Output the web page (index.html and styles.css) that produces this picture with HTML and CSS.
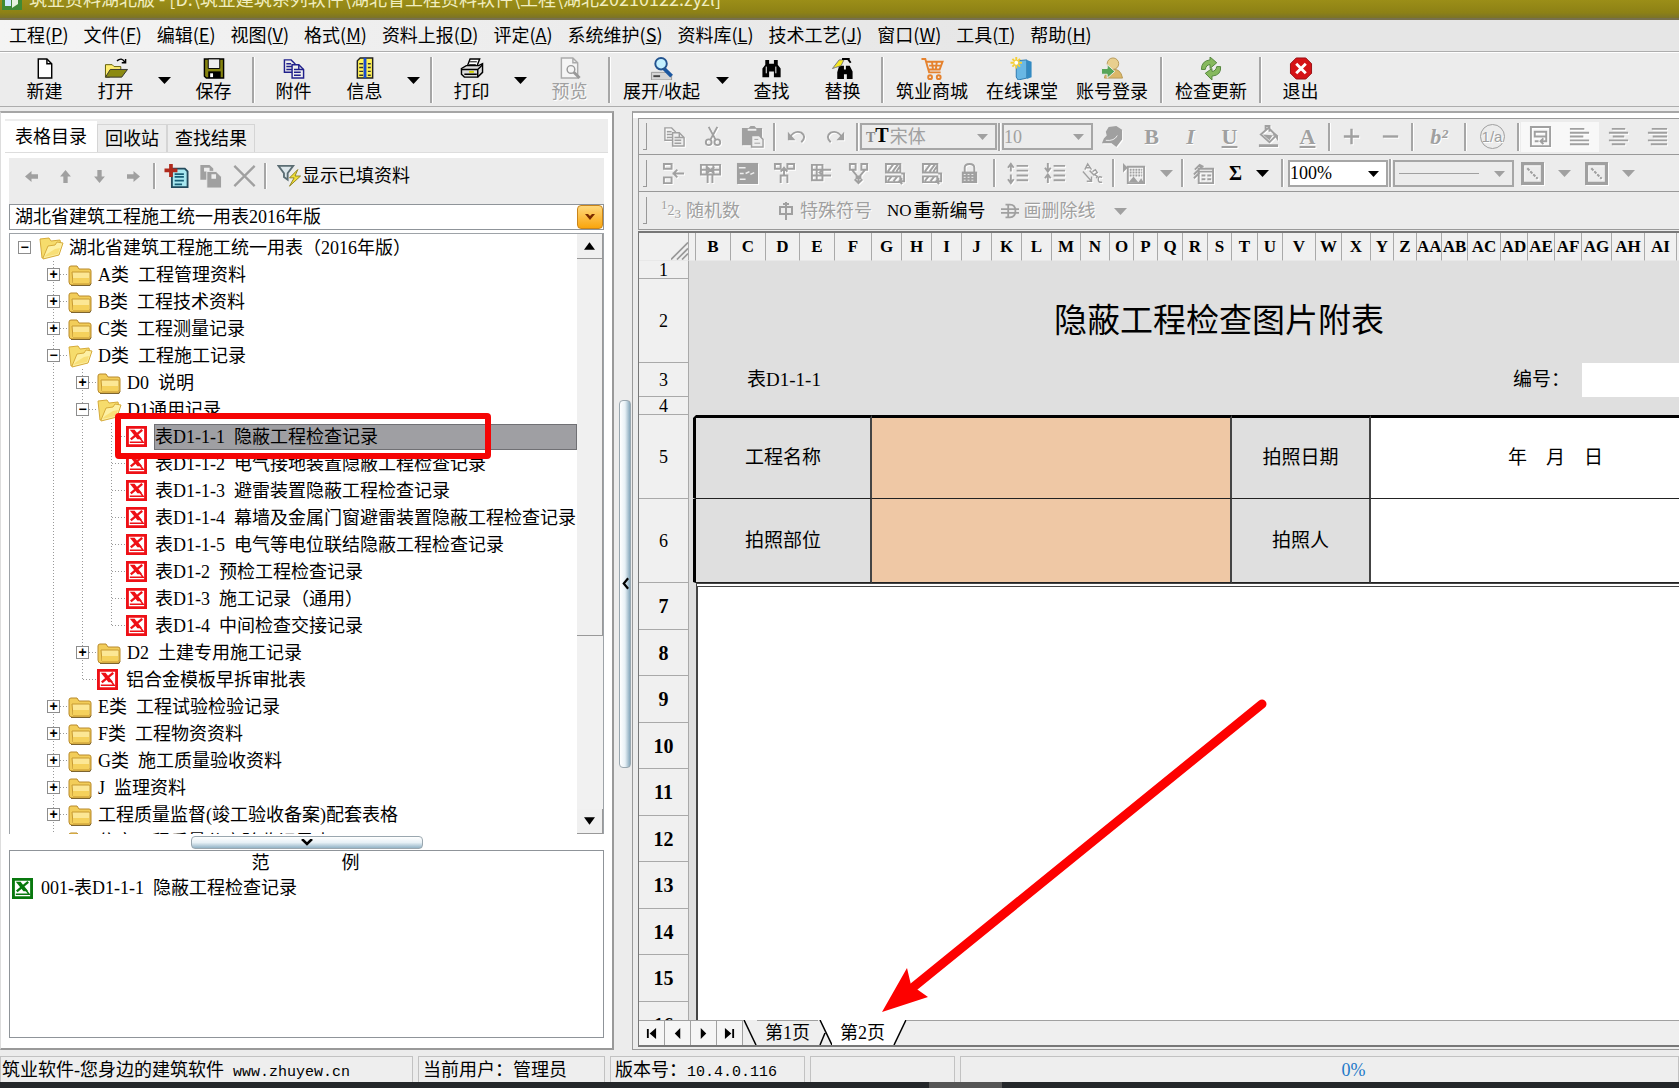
FILE: index.html
```html
<!DOCTYPE html>
<html lang="zh-CN">
<head>
<meta charset="utf-8">
<title>筑业资料湖北版</title>
<link rel="stylesheet" href="styles.css">
</head>
<body>
<svg class="defs" aria-hidden="true">
  <symbol id="closed" viewBox="0 0 25 24"><path d="M1 5q0-2 2-2h6l2 3h10q2 0 2 2v12q0 2-2 2H4q-3 0-3-3z" fill="#f2cd5a" stroke="#b98a2a"/><path d="M4 9h17q1 0 1 1v10H5z" fill="#fce795" stroke="#c79a33"/><path d="M5 15h16v5H5z" fill="#f5d15c"/><path d="M3 22.500h19l1-2" stroke="#7d6430" fill="none"/></symbol>
  <symbol id="opened" viewBox="0 0 25 24"><path d="M1 3l9-1 2 3 9-1 1 5-15 12-4 1z" fill="#f6dc6c" stroke="#d6ab3a"/><path d="M4 22l5-12 7-1 2-3 6 1-4 12-16 4z" fill="#fdf0a4" stroke="#d6ab3a"/><path d="M8 18l8-5 5-1-2 6-14 3z" fill="#f8df77"/></symbol>
  <symbol id="xls" viewBox="0 0 22 22"><path d="M1.500 1.500h19v19h-19z" fill="#fff" stroke="currentColor" stroke-width="3"/><path d="M4 4h5l8 10h-5z" fill="currentColor"/><path d="M17 4L5 14" stroke="currentColor" stroke-width="2.500"/><path d="M4 17h10M14 12l4 5h-5" stroke="currentColor" stroke-width="1.500" fill="none"/></symbol>
  <symbol id="down" viewBox="0 0 13 8"><path d="M0 1h13L6.500 8z" fill="currentColor"/></symbol>
  <symbol id="copy" viewBox="0 0 24 24"><path d="M2 3h7l4 4v9H2zM4 7h5M4 10h6M4 13h6" fill="none" stroke="currentColor" stroke-width="1.500"/><path d="M10 8h7l5 5v9H10z" fill="#eee" stroke="currentColor" stroke-width="1.500"/><path d="M12 13h5M12 16h7M12 19h7M17 8v5h5" fill="none" stroke="currentColor" stroke-width="1.500"/></symbol>
  <symbol id="bino" viewBox="0 0 24 24"><path d="M5 3h4v4h5V3h4v5l3 4v9h-7v-6h-5v6H2v-9l3-4z" fill="#000"/><path d="M6 10v7M16 10v7" stroke="#fff"/></symbol>
  <symbol id="cells" viewBox="0 0 24 24"><path d="M2 2h8v5H2zM2 16h8v6H2zM11 12h12M16 8l-4 4 4 4" fill="none" stroke="currentColor" stroke-width="2"/></symbol>
  <symbol id="gridtop" viewBox="0 0 24 24"><path d="M2 3h20v10H2zM2 8h20M8 3v10M15 3v10M9 22v-9M14 22v-9M8 5l8 7M16 5l-8 7" fill="none" stroke="currentColor" stroke-width="2"/></symbol>
  <symbol id="split" viewBox="0 0 24 24"><path d="M2 2h6v5H2zM15 2h7v5h-7zM8 22v-8h7v8M11.500 14V7M8 10l3.500-4 3.500 4" fill="none" stroke="currentColor" stroke-width="2"/></symbol>
  <symbol id="rowsplit" viewBox="0 0 24 24"><path d="M2 3h11v16H2zM2 8h11M2 14h11M7 3v16M22 8h-8l-4 3 4 3h8" fill="none" stroke="currentColor" stroke-width="2"/></symbol>
  <symbol id="merge" viewBox="0 0 24 24"><path d="M3 2h6v6H3zM15 2h6v6h-6zM5 8l5 6v4M19 8l-5 6v4M12 14v8M8 18l4 4 4-4" fill="none" stroke="currentColor" stroke-width="2"/></symbol>
  <symbol id="hatch" viewBox="0 0 24 24"><path d="M2 2h15v9H2zM2 15h15v6H2zM4 10l6-8M9 10l6-8M4 20l4-5M10 20l4-5M13 10l4-6M18 12h3v8h-4M19 17l-3 3 3 3" fill="none" stroke="currentColor" stroke-width="2"/></symbol>
  <symbol id="lock" viewBox="0 0 24 24"><path d="M7 11V6q0-4 5-4t5 4v5" fill="none" stroke="currentColor" stroke-width="2"/><path d="M4 10h16v12H4z" fill="currentColor"/><path d="M6 13h12M6 16h12M6 19h12" stroke="#eee" stroke-dasharray="2 2"/></symbol>
  <symbol id="spacing" viewBox="0 0 24 24"><path d="M10 4h12M10 9h12M10 14h12M10 19h12M4 3v7M1 6l3-4 3 4M4 13v8M1 18l3 4 3-4" fill="none" stroke="currentColor" stroke-width="2"/></symbol>
  <symbol id="tight" viewBox="0 0 24 24"><path d="M10 4h12M10 9h12M10 14h12M10 19h12M4 1v8M1 6l3 4 3-4M4 14v8M1 17l3-4 3 4" fill="none" stroke="currentColor" stroke-width="2"/></symbol>
  <symbol id="box" viewBox="0 0 22 22"><path d="M1.500 1.500h19v19h-19z" fill="none" stroke="currentColor" stroke-width="3"/><path d="M6 6l10 10" stroke="currentColor" stroke-width="2" stroke-dasharray="3 1"/></symbol>
</svg>

<header class="titlebar"><div class="title-inner">
  <svg class="app-icon" viewBox="0 0 22 26"><path d="M1 10L11 1l10 9v14H1z" fill="#3f8a35"/><path d="M4 11h6v9H4z" fill="#cfe8ff"/><path d="M11 13l6-3v8l-6 4z" fill="#e7f3df"/></svg>
  <span>筑业资料湖北版 - [D:\筑业建筑系列软件\湖北省工程资料软件\工程\湖北20210122.zyzl]</span>
</div></header>

<nav class="menubar">
  <button>工程(<u>P</u>)</button><button>文件(<u>F</u>)</button><button>编辑(<u>E</u>)</button><button>视图(<u>V</u>)</button><button>格式(<u>M</u>)</button><button>资料上报(<u>D</u>)</button><button>评定(<u>A</u>)</button><button>系统维护(<u>S</u>)</button><button>资料库(<u>L</u>)</button><button>技术工艺(<u>J</u>)</button><button>窗口(<u>W</u>)</button><button>工具(<u>T</u>)</button><button>帮助(<u>H</u>)</button>
</nav>

<div class="toolbar">
  <button class="tool"><svg viewBox="0 0 24 24"><path d="M5 2h9l5 5v15H5z" fill="#fff" stroke="#000" stroke-width="1.500"/><path d="M14 2v5h5" fill="none" stroke="#000" stroke-width="1.500"/></svg>新建</button>
  <button class="tool"><svg viewBox="0 0 24 24"><path d="M1 8h7l2 2h7v3l-12 8H1z" fill="#ffee70" stroke="#5d5a00"/><path d="M1 21l5-8h18l-6 8z" fill="#8b8a12" stroke="#333"/><path d="M13 4q5-4 8 1M22 2v4h-4" fill="none" stroke="#000" stroke-width="1.500"/></svg>打开</button>
  <button class="drop" aria-label="打开选项"><svg><use href="#down"/></svg></button>
  <button class="tool"><svg viewBox="0 0 24 24"><path d="M2 2h20v20H4l-2-2z" fill="#85830f" stroke="#000" stroke-width="1.500"/><path d="M6 2h12v10H6z" fill="#eee" stroke="#000"/><path d="M6 15h13v7H6z" fill="#000"/><path d="M8 17h3v4H8z" fill="#fff"/></svg>保存</button>
  <i class="sep"></i>
  <button class="tool"><svg class="navy"><use href="#copy"/></svg>附件</button>
  <button class="tool"><svg viewBox="0 0 24 24"><path d="M7 1h13v21H4V4z" fill="#fff257" stroke="#222" stroke-width="1.500"/><path d="M12 1v21" stroke="#174bd2" stroke-width="3"/><path d="M6 7h4M6 11h4M6 15h4M6 19h4M15 7h3M15 11h3M15 15h3M15 19h3" stroke="#333" stroke-width="1.500"/></svg>信息</button>
  <button class="drop" aria-label="信息选项"><svg><use href="#down"/></svg></button>
  <i class="sep"></i>
  <button class="tool"><svg viewBox="0 0 24 24"><path d="M7 10l3-8h10l-3 8" fill="#fff" stroke="#000" stroke-width="1.500"/><path d="M10 5h7M9 8h7" stroke="#000"/><path d="M1 12l5-3h13l4-2v9l-5 5H4l-3-3z" fill="#ddd" stroke="#000" stroke-width="1.500"/><path d="M1 13h17v8M18 13l5-5M4 18h13" fill="none" stroke="#000" stroke-width="1.500"/><path d="M9 15.500h5" stroke="#d6d600" stroke-width="2"/></svg>打印</button>
  <button class="drop" aria-label="打印选项"><svg><use href="#down"/></svg></button>
  <button class="tool off" disabled><svg viewBox="0 0 24 24"><path d="M3 1h12l5 5v16H3zM15 1v5h5" fill="#f5f5f5" stroke="#aaa" stroke-width="1.500"/><circle cx="13" cy="13" r="4" fill="none" stroke="#999" stroke-width="1.500"/><path d="M16 16l6 6" stroke="#999" stroke-width="3"/></svg>预览</button>
  <i class="sep"></i>
  <button class="tool mid"><svg viewBox="0 0 24 24"><path d="M1 16h18l3 3v5H1z" fill="#d5d5d5" stroke="#999"/><path d="M3 20h7" stroke="#444" stroke-width="2"/><path d="M14 12l8 8" stroke="#1b57a0" stroke-width="4"/><circle cx="11" cy="7" r="6" fill="#c3f0ff" stroke="#23538f" stroke-width="2"/></svg>展开/收起</button>
  <button class="drop" aria-label="展开选项"><svg><use href="#down"/></svg></button>
  <button class="tool"><svg><use href="#bino"/></svg>查找</button>
  <button class="tool"><svg viewBox="0 0 24 24"><path d="M8 9h5v4h2V9h4l3 6v8h-6v-5h-3v5H6v-7z" fill="#000"/><path d="M1 12l7-9h5l-3 6-6 2z" fill="#f6e820" stroke="#777"/><path d="M11 2h8M17 2l3 4" stroke="#000" stroke-width="2"/></svg>替换</button>
  <i class="sep"></i>
  <button class="tool wide"><svg viewBox="0 0 24 24"><path d="M1 2h4l4 14h12M6 5h17l-3 8H8M9 9h12M12 5l1 8M17 5l-1 8" fill="none" stroke="#e5822e" stroke-width="2"/><circle cx="10" cy="21" r="2" fill="none" stroke="#e5822e" stroke-width="2"/><circle cx="19" cy="21" r="2" fill="none" stroke="#e5822e" stroke-width="2"/></svg>筑业商城</button>
  <button class="tool wide"><svg viewBox="0 0 24 24"><path d="M6 4l11-1v19L8 24l-2-3z" fill="#69b7e4" stroke="#2b77ae"/><path d="M17 3l5 2v16l-5 2z" fill="#338ac2"/><path d="M6 0v12M0 6h12M2 2l8 8M10 2l-8 8" stroke="#f5cf38" stroke-width="2"/><circle cx="6" cy="6" r="2" fill="#fff"/></svg>在线课堂</button>
  <button class="tool wide"><svg viewBox="0 0 24 24"><circle cx="13" cy="7" r="6" fill="#e8cf8e" stroke="#b79a57"/><path d="M4 22q2-10 9-9 8-1 10 9z" fill="#dcb768" stroke="#b79a57"/><path d="M1 12h6V8l8 7-8 7v-4H1z" fill="#57a558" stroke="#eee"/></svg>账号登录</button>
  <i class="sep"></i>
  <button class="tool wide"><svg viewBox="0 0 24 24"><path d="M2 13q0-9 9-10V0l7 6-7 6V8q-4 0-5 5z" fill="#86b95d" stroke="#51843a"/><path d="M22 10q1 9-9 10v4l-7-7 7-5v3q4 0 5-5z" fill="#86b95d" stroke="#51843a"/></svg>检查更新</button>
  <i class="sep"></i>
  <button class="tool"><svg viewBox="0 0 24 24"><path d="M7 1h10l6 6v10l-6 6H7l-6-6V7z" fill="#d51317" stroke="#951014"/><path d="M7 7l10 10M17 7L7 17" stroke="#fff" stroke-width="3"/></svg>退出</button>
</div>

<main class="work">
  <section class="side">
    <div class="tabs"><button class="tab on">表格目录</button><button class="tab">回收站</button><button class="tab">查找结果</button></div>
    <div class="side-body">
      <div class="strip">
        <button class="move" disabled aria-label="左移"><svg viewBox="0 0 12 12"><path d="M0 6l6-5v3h6v4H6v3z"/></svg></button>
        <button class="move" disabled aria-label="上移"><svg viewBox="0 0 12 12"><path d="M6 0l5 6H8v6H4V6H1z"/></svg></button>
        <button class="move" disabled aria-label="下移"><svg viewBox="0 0 12 12"><path d="M6 12l5-6H8V0H4v6H1z"/></svg></button>
        <button class="move" disabled aria-label="右移"><svg viewBox="0 0 12 12"><path d="M12 6L6 1v3H0v4h6v3z"/></svg></button>
        <i class="sep"></i>
        <button class="act" aria-label="新增"><svg viewBox="0 0 26 26"><path d="M8 5h14l3 3v17H8z" fill="#a8e8f0" stroke="#234a5c" stroke-width="2"/><path d="M11 11h10M11 14h10M11 18h10M11 22h8" stroke="#185f77" stroke-width="2"/><path d="M7 0v14M0 7h14" stroke="#b02a1c" stroke-width="4"/></svg></button>
        <button class="act" disabled aria-label="复制"><svg viewBox="0 0 26 26"><path d="M2 1h10l4 4v12H2z" fill="#a0a0a0"/><path d="M9 8h10l6 6v12H9z" fill="#a0a0a0" stroke="#eee"/><path d="M6 4h6v4H6zM14 11h5v5h-5z" fill="#eee"/></svg></button>
        <button class="act" disabled aria-label="删除"><svg viewBox="0 0 26 26"><path d="M2 2l22 22M24 2L2 24" stroke="#a0a0a0" stroke-width="2.500"/></svg></button>
        <i class="sep"></i>
        <button class="filter"><svg viewBox="0 0 26 26"><path d="M1 2h16l-6 8v7l-4-3v-4z" fill="#dce6ea" stroke="#5b6d73" stroke-width="2"/><path d="M22 6l-9 9h5l-5 9 12-11h-6z" fill="#f1de35" stroke="#8c8120"/></svg>显示已填资料</button>
      </div>
      <div class="library"><select aria-label="表格库"><option>湖北省建筑工程施工统一用表2016年版</option></select><span class="gold"><svg viewBox="0 0 12 8"><path d="M1 1h3l2 2 2-2h3L6 7z" fill="#7a2c00"/></svg></span></div>
      <div class="tree-box">
        <ul class="tree">
          <li><span class="g"><button>−</button></span><svg><use href="#opened"/></svg><span>湖北省建筑工程施工统一用表（2016年版）</span></li>
          <li><i class="g"></i><span class="g v h"><button>+</button></span><svg><use href="#closed"/></svg><span>A类&ensp;工程管理资料</span></li>
          <li><i class="g"></i><span class="g v h"><button>+</button></span><svg><use href="#closed"/></svg><span>B类&ensp;工程技术资料</span></li>
          <li><i class="g"></i><span class="g v h"><button>+</button></span><svg><use href="#closed"/></svg><span>C类&ensp;工程测量记录</span></li>
          <li><i class="g"></i><span class="g v h"><button>−</button></span><svg><use href="#opened"/></svg><span>D类&ensp;工程施工记录</span></li>
          <li><i class="g"></i><i class="g v"></i><span class="g v h"><button>+</button></span><svg><use href="#closed"/></svg><span>D0&ensp;说明</span></li>
          <li><i class="g"></i><i class="g v"></i><span class="g v h"><button>−</button></span><svg><use href="#opened"/></svg><span>D1通用记录</span></li>
          <li class="picked"><i class="g"></i><i class="g v"></i><i class="g v"></i><i class="g v h"></i><svg class="leaf"><use href="#xls"/></svg><span>表D1-1-1&ensp;隐蔽工程检查记录</span><div class="mark"></div></li>
          <li><i class="g"></i><i class="g v"></i><i class="g v"></i><i class="g v h"></i><svg class="leaf"><use href="#xls"/></svg><span>表D1-1-2&ensp;电气接地装置隐蔽工程检查记录</span></li>
          <li><i class="g"></i><i class="g v"></i><i class="g v"></i><i class="g v h"></i><svg class="leaf"><use href="#xls"/></svg><span>表D1-1-3&ensp;避雷装置隐蔽工程检查记录</span></li>
          <li><i class="g"></i><i class="g v"></i><i class="g v"></i><i class="g v h"></i><svg class="leaf"><use href="#xls"/></svg><span>表D1-1-4&ensp;幕墙及金属门窗避雷装置隐蔽工程检查记录</span></li>
          <li><i class="g"></i><i class="g v"></i><i class="g v"></i><i class="g v h"></i><svg class="leaf"><use href="#xls"/></svg><span>表D1-1-5&ensp;电气等电位联结隐蔽工程检查记录</span></li>
          <li><i class="g"></i><i class="g v"></i><i class="g v"></i><i class="g v h"></i><svg class="leaf"><use href="#xls"/></svg><span>表D1-2&ensp;预检工程检查记录</span></li>
          <li><i class="g"></i><i class="g v"></i><i class="g v"></i><i class="g v h"></i><svg class="leaf"><use href="#xls"/></svg><span>表D1-3&ensp;施工记录（通用）</span></li>
          <li><i class="g"></i><i class="g v"></i><i class="g v"></i><i class="g v h end"></i><svg class="leaf"><use href="#xls"/></svg><span>表D1-4&ensp;中间检查交接记录</span></li>
          <li><i class="g"></i><i class="g v"></i><span class="g v h"><button>+</button></span><svg><use href="#closed"/></svg><span>D2&ensp;土建专用施工记录</span></li>
          <li><i class="g"></i><i class="g v"></i><i class="g v h end"></i><svg class="leaf"><use href="#xls"/></svg><span>铝合金模板早拆审批表</span></li>
          <li><i class="g"></i><span class="g v h"><button>+</button></span><svg><use href="#closed"/></svg><span>E类&ensp;工程试验检验记录</span></li>
          <li><i class="g"></i><span class="g v h"><button>+</button></span><svg><use href="#closed"/></svg><span>F类&ensp;工程物资资料</span></li>
          <li><i class="g"></i><span class="g v h"><button>+</button></span><svg><use href="#closed"/></svg><span>G类&ensp;施工质量验收资料</span></li>
          <li><i class="g"></i><span class="g v h"><button>+</button></span><svg><use href="#closed"/></svg><span>J&ensp;监理资料</span></li>
          <li><i class="g"></i><span class="g v h"><button>+</button></span><svg><use href="#closed"/></svg><span>工程质量监督(竣工验收备案)配套表格</span></li>
          <li><i class="g"></i><span class="g v h"><button>+</button></span><svg><use href="#closed"/></svg><span>住宅工程质量分户验收记录表</span></li>
        </ul>
        <div class="scroll"><button aria-label="向上"><svg viewBox="0 0 12 8"><path d="M0 8h12L6 0z"/></svg></button><div class="thumb"></div><div class="track"></div><button aria-label="向下"><svg viewBox="0 0 12 8"><path d="M0 0h12L6 8z"/></svg></button></div>
      </div>
      <button class="hsplit" aria-label="折叠范例"><svg viewBox="0 0 12 8"><path d="M1 0l5 5 5-5" fill="none" stroke="#000" stroke-width="2.500"/></svg></button>
      <div class="examples">
        <div class="ex-head"><span>范</span><span>例</span></div>
        <div class="ex-row"><svg class="leaf green"><use href="#xls"/></svg><span>001-表D1-1-1&ensp;隐蔽工程检查记录</span></div>
      </div>
    </div>
  </section>

  <div class="vsplit"><button aria-label="折叠目录"><svg viewBox="0 0 8 14"><path d="M7 1L2 7l5 6" fill="none" stroke="#000" stroke-width="2.500"/></svg></button></div>

  <section class="editor">
    <div class="bar first">
      <i class="grip"></i>
      <button class="ib" disabled aria-label="复制"><svg><use href="#copy"/></svg></button>
      <button class="ib" disabled aria-label="剪切"><svg viewBox="0 0 24 24"><path d="M7 2l7 13M16 2L9 15" stroke="currentColor" stroke-width="2"/><circle cx="7" cy="18" r="3" fill="none" stroke="currentColor" stroke-width="2"/><circle cx="16" cy="18" r="3" fill="none" stroke="currentColor" stroke-width="2"/></svg></button>
      <button class="ib" disabled aria-label="粘贴"><svg viewBox="0 0 24 24"><path d="M1 3h7l2-2h4l2 2h6v18H1z" fill="currentColor"/><path d="M7 5h9" stroke="#eee" stroke-width="2"/><path d="M11 11h8l4 4v8H11z" fill="#eee" stroke="currentColor" stroke-width="1.500"/><path d="M14 15h4M14 19h6" stroke="currentColor"/></svg></button>
      <i class="sep"></i>
      <button class="ib" disabled aria-label="撤销"><svg viewBox="0 0 24 24"><path d="M5 13q5-8 12-5 6 4 0 10" fill="none" stroke="currentColor" stroke-width="2"/><path d="M3 7v9h8z" fill="currentColor"/></svg></button>
      <button class="ib" disabled aria-label="重做"><svg viewBox="0 0 24 24"><path d="M19 13q-5-8-12-5-6 4 0 10" fill="none" stroke="currentColor" stroke-width="2"/><path d="M21 7v9h-8z" fill="currentColor"/></svg></button>
      <i class="sep"></i>
      <div class="combo font off"><b class="tt"><small>T</small>T</b><select disabled aria-label="字体"><option>宋体</option></select><svg><use href="#down"/></svg></div>
      <i class="sep"></i>
      <div class="combo size off"><select disabled aria-label="字号"><option>10</option></select><svg><use href="#down"/></svg></div>
      <button class="ib" disabled aria-label="格式刷"><svg viewBox="0 0 24 24"><path d="M8 2l8-1 6 4v10l-6 8-5-4H1l2-5 3-3-1-4z" fill="currentColor"/><path d="M5 16q9 1 12-5" stroke="#eee" fill="none"/></svg></button>
      <button class="ib glyph" disabled><b>B</b></button>
      <button class="ib glyph" disabled><b><i>I</i></b></button>
      <button class="ib glyph" disabled><b><u>U</u></b></button>
      <button class="ib" disabled aria-label="填充"><svg viewBox="0 0 24 24"><path d="M4 10l8-7 8 8-7 7zM9 6V1h4v6" fill="none" stroke="currentColor" stroke-width="2"/><path d="M6 10l12 1 4 6v-6l-4-3-5 8zM2 20h20v3H2z" fill="currentColor"/></svg></button>
      <button class="ib glyph" disabled><b><u>A</u></b></button>
      <i class="sep"></i>
      <button class="ib" disabled aria-label="增大"><svg viewBox="0 0 24 24"><path d="M12 4v16M4 12h16" stroke="currentColor" stroke-width="2.500"/></svg></button>
      <button class="ib" disabled aria-label="减小"><svg viewBox="0 0 24 24"><path d="M4 12h16" stroke="currentColor" stroke-width="2.500"/></svg></button>
      <i class="sep"></i>
      <button class="ib big glyph" disabled><b><i>b²</i></b></button>
      <i class="sep"></i>
      <button class="ib big" disabled><span class="ring">1/a</span></button>
      <i class="sep"></i>
      <button class="ib lit" disabled aria-label="自动换行"><svg viewBox="0 0 24 24"><path d="M2 2h20v20H2zM6 7h12v5H6zM18 12v5h-5M6 17h4M15 14l-3 3 3 3" fill="none" stroke="currentColor" stroke-width="2"/></svg></button>
      <button class="ib lit" disabled aria-label="左对齐"><svg viewBox="0 0 24 24"><path d="M2 4h15M2 8h20M2 12h14M2 16h20M2 20h20" stroke="currentColor" stroke-width="2"/></svg></button>
      <button class="ib" disabled aria-label="居中"><svg viewBox="0 0 24 24"><path d="M5 4h14M2 8h20M6 12h12M2 16h20M5 20h14" stroke="currentColor" stroke-width="2"/></svg></button>
      <button class="ib" disabled aria-label="右对齐"><svg viewBox="0 0 24 24"><path d="M6 4h16M2 8h20M7 12h15M2 16h20M5 20h17" stroke="currentColor" stroke-width="2"/></svg></button>
    </div>
    <div class="bar second">
      <i class="grip"></i>
      <button class="ib" disabled aria-label="插入单元格"><svg><use href="#cells"/></svg></button>
      <button class="ib" disabled aria-label="插入列"><svg><use href="#gridtop"/></svg></button>
      <button class="ib" disabled aria-label="单元格"><svg viewBox="0 0 24 24"><path d="M1 1h22v22H1z" fill="currentColor"/><path d="M3 6h7M4 12h4M10 12l4-2M15 13l4-2M4 18h6" stroke="#eee" stroke-width="1.500"/></svg></button>
      <button class="ib" disabled aria-label="拆分列"><svg><use href="#split"/></svg></button>
      <button class="ib" disabled aria-label="拆分行"><svg><use href="#rowsplit"/></svg></button>
      <button class="ib" disabled aria-label="合并"><svg><use href="#merge"/></svg></button>
      <button class="ib" disabled aria-label="上方行"><svg><use href="#hatch"/></svg></button>
      <button class="ib" disabled aria-label="下方行"><svg><use href="#hatch"/></svg></button>
      <button class="ib" disabled aria-label="锁定"><svg><use href="#lock"/></svg></button>
      <i class="sep roomy"></i>
      <button class="ib" disabled aria-label="增大行距"><svg><use href="#spacing"/></svg></button>
      <button class="ib" disabled aria-label="减小行距"><svg><use href="#tight"/></svg></button>
      <button class="ib" disabled aria-label="文字方向"><svg viewBox="0 0 24 24"><path d="M4 8l3-6 4 6M5 6h4M9 9l5 5M12 10l3-2 2 3-3 2 3 2-1 2M22 16q-4-2-4 2t4 3M2 10l9 10M11 15v5H6" fill="none" stroke="currentColor" stroke-width="1.500"/></svg></button>
      <i class="sep"></i>
      <button class="ib" disabled aria-label="图片"><svg viewBox="0 0 24 24"><path d="M0 1v10l5-5z" fill="currentColor"/><path d="M5 5h17v17H5z" fill="none" stroke="currentColor" stroke-width="2"/><path d="M7 8h13M7 11h13M7 14h13" stroke="currentColor" stroke-width="2" stroke-dasharray="2 1"/><path d="M6 21l5-6 5 6 3-4 3 5z" fill="currentColor"/></svg></button>
      <button class="drop" disabled aria-label="图片选项"><svg><use href="#down"/></svg></button>
      <i class="sep"></i>
      <button class="ib" disabled aria-label="填表"><svg viewBox="0 0 24 24"><path d="M7 7h15v15H7zM7 10h15M10 14h4M16 14h4M10 18h4M16 18h4M3 8l5-5 4 2M2 13l8-8M2 17l6-6" fill="none" stroke="currentColor" stroke-width="2"/></svg></button>
      <button class="drop sigma">Σ</button>
      <button class="drop" aria-label="求和选项"><svg><use href="#down"/></svg></button>
      <i class="sep roomy"></i>
      <div class="combo zoom"><select aria-label="缩放"><option>100%</option></select><svg><use href="#down"/></svg></div>
      <i class="sep"></i>
      <div class="combo line off"><select disabled aria-label="线型"><option></option></select><hr><svg><use href="#down"/></svg></div>
      <button class="ib" disabled aria-label="斜线一"><svg><use href="#box"/></svg></button>
      <button class="drop" disabled aria-label="斜线一选项"><svg><use href="#down"/></svg></button>
      <button class="ib" disabled aria-label="斜线二"><svg><use href="#box"/></svg></button>
      <button class="drop" disabled aria-label="斜线二选项"><svg><use href="#down"/></svg></button>
    </div>
    <div class="bar third">
      <i class="grip"></i>
      <button class="word" disabled><span class="n123"><sup>1</sup>2<sub>3</sub></span>随机数</button>
      <button class="word" disabled><svg viewBox="0 0 18 20"><path d="M9 1v18M3 6h12v7H3zM6 3h6" fill="none" stroke="currentColor" stroke-width="2"/></svg>特殊符号</button>
      <button class="word"><span class="no">NO</span>重新编号</button>
      <button class="word" disabled><svg viewBox="0 0 20 20"><path d="M5 3h5q6 0 6 7t-6 7H5M8 3v14M0 8h20M0 12h20" fill="none" stroke="currentColor" stroke-width="2"/></svg>画删除线</button>
      <button class="drop" disabled aria-label="删除线选项"><svg><use href="#down"/></svg></button>
    </div>

    <div class="sheet">
      <table>
        <colgroup><col class="w50"><col class="w7"><col class="w35"><col class="w35"><col class="w34"><col class="w35"><col class="w37"><col class="w30" span="6"><col class="w29" span="2"><col class="w24" span="2"><col class="w25" span="2"><col class="w24"><col class="w26"><col class="w25"><col class="w33"><col class="w26"><col class="w29"><col class="w23" span="2"><col class="w25"><col class="w26"><col class="w33"><col class="w27" span="3"><col class="w30"><col class="w33"><col class="w32"><col class="w65"></colgroup>
        <thead><tr><th class="corner"><svg viewBox="0 0 20 20"><path d="M0 20L20 0M7 20L20 7M13 20l7-7" stroke="#999" stroke-width="2"/></svg></th><th></th><th>B</th><th>C</th><th>D</th><th>E</th><th>F</th><th>G</th><th>H</th><th>I</th><th>J</th><th>K</th><th>L</th><th>M</th><th>N</th><th>O</th><th>P</th><th>Q</th><th>R</th><th>S</th><th>T</th><th>U</th><th>V</th><th>W</th><th>X</th><th>Y</th><th>Z</th><th>AA</th><th>AB</th><th>AC</th><th>AD</th><th>AE</th><th>AF</th><th>AG</th><th>AH</th><th>AI</th><th></th></tr></thead>
        <tbody>
          <tr class="thin"><th>1</th><td colspan="36"></td></tr>
          <tr class="tall"><th>2</th><td></td><td colspan="35" class="heading">隐蔽工程检查图片附表</td></tr>
          <tr class="code"><th>3</th><td></td><td colspan="5">表D1-1-1</td><td colspan="22"></td><td colspan="4" class="numlabel"><label for="num">编号：</label></td><td colspan="4" class="white"><input id="num" type="text"></td></tr>
          <tr class="thin"><th>4</th><td colspan="36"></td></tr>
          <tr class="tall form top"><th>5</th><td class="edge"></td><td colspan="5">工程名称</td><td colspan="13" class="peach"></td><td colspan="5">拍照日期</td><td colspan="12" class="white">年&ensp;&ensp;月&ensp;&ensp;日</td></tr>
          <tr class="tall form"><th>6</th><td class="edge"></td><td colspan="5">拍照部位</td><td colspan="13" class="peach"></td><td colspan="5">拍照人</td><td colspan="12" class="white"></td></tr>
          <tr class="blank"><th>7</th><td rowspan="10"></td><td colspan="35" rowspan="10" class="canvas"></td></tr>
          <tr class="blank"><th>8</th></tr><tr class="blank"><th>9</th></tr><tr class="blank"><th>10</th></tr><tr class="blank"><th>11</th></tr><tr class="blank"><th>12</th></tr><tr class="blank"><th>13</th></tr><tr class="blank"><th>14</th></tr><tr class="blank"><th>15</th></tr><tr class="blank"><th>16</th></tr>
        </tbody>
      </table>
    </div>
    <div class="pages">
      <button class="nav" aria-label="首页"><svg viewBox="0 0 12 12"><path d="M1 1h2v10H1zM11 0v12L4 6z"/></svg></button>
      <button class="nav" aria-label="上一页"><svg viewBox="0 0 12 12"><path d="M9 0v12L3 6z"/></svg></button>
      <button class="nav" aria-label="下一页"><svg viewBox="0 0 12 12"><path d="M3 0v12l6-6z"/></svg></button>
      <button class="nav" aria-label="末页"><svg viewBox="0 0 12 12"><path d="M9 1h2v10H9zM1 0v12l7-6z"/></svg></button>
      <svg class="slant" viewBox="0 0 14 25"><path d="M1 0l12 25" stroke="#000" stroke-width="1.500"/></svg>
      <button class="page">第1页</button>
      <svg class="slant" viewBox="0 0 14 25"><path d="M2 0h12v25z" fill="#fff"/><path d="M2 0l12 25M7 13L2 25" stroke="#000" stroke-width="1.500"/></svg>
      <button class="page on">第2页</button>
      <svg class="slant" viewBox="0 0 14 25"><path d="M0 0h13L1 25H0z" fill="#fff"/><path d="M13 0L1 25" stroke="#000" stroke-width="1.500"/></svg>
      <span class="rest"></span>
    </div>
    <svg class="arrow" viewBox="0 0 390 318"><path d="M382 7L31 292" stroke="#fd0100" stroke-width="9" stroke-linecap="round"/><path d="M2 315L27 271L31 288L48 300z" fill="#fd0100"/></svg>
  </section>
</main>

<footer class="status">
  <div class="s1">筑业软件-您身边的建筑软件&ensp;<span class="mono">www.zhuyew.cn</span></div>
  <div class="s2">当前用户：管理员</div>
  <div class="s3">版本号：<span class="mono">10.4.0.116</span></div>
  <div class="s4"></div>
  <div class="s5">0%</div>
</footer>
<div class="desk"><i></i></div>
</body>
</html>
```
FILE: styles.css
```css
* { box-sizing: border-box; }
body {
  margin: 0; height: 100vh; overflow: hidden;
  display: flex; flex-direction: column;
  background: #ececec; color: #000;
  font: 18px/24px "Liberation Serif", "Noto Sans CJK SC", serif;
}
button, select, input { font: inherit; color: inherit; border: 0; padding: 0; margin: 0; background: none; }
button { display: flex; align-items: center; justify-content: center; white-space: nowrap; }
select { appearance: none; opacity: 1; }
svg { display: block; flex: none; }
.defs { position: absolute; width: 0; height: 0; }
button:disabled, .off { color: #a0a0a0; text-shadow: 1px 1px 0 #fff; }

.titlebar { flex: none; height: 20px; overflow: hidden; background: linear-gradient(#9b8e18, #8d8115 70%, #7b7328); border-bottom: 2px solid #77704d; color: #f1eec0; font-family: "Noto Sans CJK SC", sans-serif; }
.title-inner { display: flex; gap: 5px; margin-top: -14px; height: 26px; white-space: nowrap; }
.app-icon { width: 24px; height: 26px; }

.menubar { flex: none; display: flex; align-items: flex-start; gap: 15px; height: 32px; padding: 2px 9px 0; background: linear-gradient(90deg, #f4f4f4, #e6e6e6 60%); border-bottom: 1px solid #adadad; font-family: "Noto Sans CJK SC", sans-serif; }

.toolbar { flex: none; display: flex; align-items: center; height: 55px; padding-left: 9px; border-bottom: 1px solid #adadad; border-top: 1px solid #fff; }
.tool { width: 71px; flex-direction: column; gap: 1px; line-height: 22px; }
.tool svg { width: 24px; height: 23px; }
.mid { width: 95px; }
.wide { width: 90px; }
.navy { color: #20208c; }
.drop { width: 27px; }
.drop svg { width: 13px; height: 8px; }
.sep { flex: none; width: 9px; height: 46px; display: flex; }
.sep::before { content: ""; width: 2px; margin: 0 auto; background: #a6a6a6; border-right: 1px solid #fff; }

.work { flex: 1; min-height: 0; display: flex; padding-top: 4px; }
.side { flex: none; width: 614px; display: flex; flex-direction: column; background: #fff; border-top: 2px solid #a6a6a6; border-right: 2px solid #999; border-bottom: 2px solid #999; margin-bottom: 6px; padding: 6px 4px 10px; border-left: 1px solid #ddd; }
.tabs { display: flex; align-items: flex-end; height: 34px; background: #ededed; border-bottom: 1px solid #ddd; }
.tab { height: 28px; padding: 0 7px; border: 1px solid #d5d5d5; border-bottom: 0; line-height: 26px; }
.tab.on { height: 31px; padding: 0 9px; background: #fff; border-color: #fff; }
.side-body { flex: 1; min-height: 0; display: flex; flex-direction: column; margin: 5px 4px 0; }
.strip { flex: none; display: flex; align-items: flex-start; padding: 5px 0 0 5px; height: 46px; background: #ececec; }
.strip button { height: 26px; }
.strip .sep { height: 26px; }
.move { width: 34px; }
.move svg { width: 13px; height: 13px; fill: #a0a0a0; }
.act { width: 34px; }
.act svg, .filter svg { width: 25px; height: 24px; }
.filter { margin-left: 7px; }
.library { flex: none; display: flex; height: 26px; border: 1px solid #8f9499; margin-bottom: 3px; }
.library select { flex: 1; padding-left: 5px; }
.gold { width: 26px; display: flex; align-items: center; justify-content: center; background: linear-gradient(#ffd87c, #f9a50d); border: 1px solid #c9851b; border-radius: 4px; }
.gold svg { width: 12px; height: 8px; }
.tree-box { flex: 1; min-height: 0; display: flex; overflow: hidden; border: 1px solid #9ea3a8; border-bottom: 0; }
.tree { flex: 1; min-width: 0; margin: 0; padding: 0; list-style: none; overflow: hidden; }
.tree li { display: flex; align-items: center; height: 27px; white-space: nowrap; position: relative; }
.tree li > svg { width: 25px; height: 24px; margin-right: 5px; }
svg.leaf, .tree li > svg.leaf { width: 21px; height: 21px; margin-right: 8px; color: #ee1016; }
svg.leaf.green { color: #08780e; }
.g { flex: none; width: 29px; height: 27px; display: flex; align-items: center; justify-content: center; background-repeat: no-repeat; }
.g button { width: 13px; height: 13px; background: #fff; border: 1px solid #8d8d8d; font: bold 14px/11px "Liberation Sans", sans-serif; }
.v { background-image: repeating-linear-gradient(#999 0 1px, transparent 1px 3px); background-size: 1px 100%; background-position: 14px 0; }
.h { background-image: repeating-linear-gradient(#999 0 1px, transparent 1px 3px), repeating-linear-gradient(90deg, #999 0 1px, transparent 1px 3px); background-size: 1px 100%, 14px 1px; background-position: 14px 0, 15px 13px; }
.end { background-size: 1px 14px, 14px 1px; }
.picked > span { flex: 1; background: #9f9fa3; border: 1px solid #707074; }
.tree li.picked > svg.leaf { margin-right: 7px; }
.mark { position: absolute; left: 105px; top: -10px; width: 376px; height: 46px; border: 6px solid #f50505; border-radius: 4px; z-index: 2; }
.scroll { flex: none; width: 26px; display: flex; flex-direction: column; background: #f1f1f1; }
.scroll button { height: 25px; background: #f0f0f0; border-bottom: 1px solid #999; border-right: 1px solid #999; }
.scroll svg { width: 11px; height: 8px; }
.thumb { flex: 378; background: #f0f0f0; border: 1px solid #999; border-top: 0; border-left: 0; }
.track { flex: 174; }
.hsplit { flex: none; align-self: center; width: 232px; height: 13px; margin: 2px 0 1px; border: 1px solid #9aa7af; border-radius: 4px; background: linear-gradient(#fff, #e8f1f6 50%, #92b3c6); }
.hsplit svg { width: 12px; height: 8px; }
.examples { flex: none; height: 188px; border: 1px solid #8f9499; padding-left: 2px; }
.ex-head { display: flex; justify-content: center; gap: 72px; padding-right: 4px; line-height: 25px; }
.ex-row { display: flex; align-items: center; }

.vsplit { flex: none; width: 18px; display: flex; align-items: center; justify-content: flex-end; padding-right: 1px; }
.vsplit button { width: 12px; height: 368px; border: 1px solid #9aa7af; border-radius: 4px; background: linear-gradient(90deg, #fff, #e8f1f6 50%, #86a8bc); }
.vsplit svg { width: 7px; height: 13px; }

.editor { flex: 1; min-width: 0; display: flex; flex-direction: column; position: relative; overflow: hidden; border-left: 1px solid #999; border-top: 2px solid #a6a6a6; border-bottom: 1px solid #999; margin-bottom: 6px; padding: 5px 0 2px 5px; }
.bar { flex: none; display: flex; align-items: center; height: 37px; border-top: 1px solid #999; border-left: 1px solid #999; overflow: hidden; }
.first { height: 36px; }
.editor::before { content: ""; height: 5px; margin: -5px 0 0 -5px; background: #fff; }
.grip { flex: none; width: 4px; height: 27px; margin: 0 8px 0 4px; border-right: 1px solid #999; border-bottom: 1px solid #999; }
.ib { flex: none; width: 39px; height: 30px; }
.ib svg { width: 23px; height: 23px; filter: drop-shadow(1px 1px 0 #fff); }
.bar .sep { width: 5px; height: 28px; }
.bar .roomy { width: 12px; }
.second .ib { width: 37px; }
.bar .big { width: 48px; }
.glyph { font-size: 22px; }
.lit { background: #f8f8f8; }
.ring { border: 1px solid #a0a0a0; border-radius: 50%; width: 25px; height: 25px; font: 15px/23px "Liberation Sans", sans-serif; }
.combo { flex: none; display: flex; align-items: center; height: 27px; border: 2px solid #a6a6a6; padding: 0 7px 0 0; }
.combo select { flex: 1; min-width: 0; }
.combo svg { width: 11px; height: 7px; }
.font { width: 137px; }
.size { width: 91px; }
.zoom { width: 100px; background: #fff; }
.line { width: 121px; }
.line select { flex: 0; }
.line hr { width: 80px; margin: 0 auto 0 4px; border: 0; border-top: 1px solid #a0a0a0; }
.tt { color: #000; padding: 0 1px 0 4px; text-shadow: none; font-size: 20px; }
.tt small { font-size: 14px; color: #888; }
.sigma { font: bold 20px/24px "Liberation Serif", serif; }
.third { height: 39px; border-bottom: 1px solid #999; }
.word { gap: 5px; margin: 0 33px 0 6px; }
.word svg { width: 18px; height: 20px; }
.word + .word { margin: 0 11px 0 4px; }
.n123 { font-size: 14px; line-height: 20px; }
.n123 sup, .n123 sub { font-size: 13px; line-height: 10px; }
.no { font-size: 17px; margin-right: -3px; }

.sheet { flex: 1; min-height: 0; overflow: hidden; border-top: 2px solid #777; border-left: 1px solid #777; margin-top: 1px; background: #dfdfdf; }
table { table-layout: fixed; width: 1103px; border-collapse: separate; border-spacing: 0; }
th, td { padding: 0; overflow: hidden; }
th { background: #f0f0f0; border-right: 1px solid #a9a9a9; border-bottom: 1px solid #a9a9a9; font-weight: 400; }
thead th { height: 28px; font-size: 17px; font-weight: 700; line-height: 20px; border-bottom-color: #e8e8e8; white-space: nowrap; }
td { text-align: center; font-size: 19px; background: #dfdfdf; }
.corner svg { width: 17px; height: 18px; margin: 8px 0 0 auto; }
.thin { height: 18px; line-height: 16px; }
.tall { height: 84px; }
.code { height: 34px; }
.blank { height: 47px; }
.blank:nth-child(even) { height: 46px; }
.blank th { font-weight: 700; font-size: 20px; }
.heading { font-size: 33px; line-height: 40px; }
.numlabel { text-align: right; padding-right: 12px; }
.white { background: #fff; }
.white input { width: 100%; height: 24px; display: block; }
.peach { background: #efc8a5; }
.form td { border-bottom: 1px solid #222; border-right: 2px solid #444; }
.form.top td { border-top: 3px solid #000; }
.form td.edge, .form.top td.edge { border-top-color: #dfdfdf; border-bottom-color: #dfdfdf; border-right: 3px solid #000; }
.canvas { background: #fff; border-left: 2px solid #444; border-top: 4px double #444; }
.w7 { width: 7px; } .w23 { width: 23px; } .w24 { width: 24px; } .w25 { width: 25px; } .w26 { width: 26px; }
.w27 { width: 27px; } .w29 { width: 29px; } .w30 { width: 30px; } .w32 { width: 32px; } .w33 { width: 33px; }
.w34 { width: 34px; } .w35 { width: 35px; } .w37 { width: 37px; } .w50 { width: 50px; } .w65 { width: 65px; }

.pages { flex: none; display: flex; height: 27px; background: #efefef; border-bottom: 2px solid #777; border-left: 1px solid #777; }
.nav { width: 26px; background: #f5f5f5; border-right: 1px solid #a0a0a0; border-top: 1px solid #a0a0a0; }
.nav svg { width: 11px; height: 11px; }
.slant { width: 14px; height: 25px; }
.page { width: 61px; border-top: 1px solid #a0a0a0; }
.page.on { background: #fff; border-color: #fff; }
.rest { flex: 1; border-top: 1px solid #a0a0a0; }
.arrow { position: absolute; left: 247px; top: 584px; width: 390px; height: 318px; }

.status { flex: none; display: flex; gap: 5px; height: 26px; white-space: nowrap; }
.status div { border: 1px solid #c2c2c2; border-bottom: 0; line-height: 26px; padding-left: 4px; background: #eee; }
.status .s1 { width: 413px; padding-left: 1px; }
.s2 { width: 187px; } .s3 { width: 195px; } .s4 { width: 145px; }
.status .s5 { flex: 1; text-align: center; padding-left: 68px; color: #1c78c8; }
.mono { font: 15px/24px "Liberation Mono", monospace; }
.desk { flex: none; height: 6px; background: #24272a; display: flex; }
.desk i { width: 73px; margin-left: 929px; background: #555; }
```
